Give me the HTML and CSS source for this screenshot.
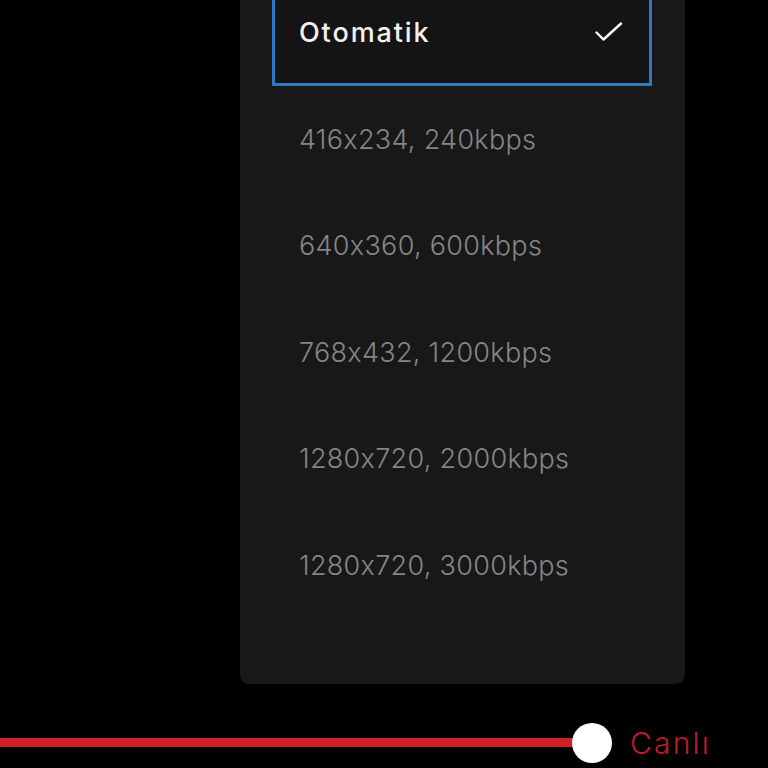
FILE: index.html
```html
<!DOCTYPE html>
<html lang="tr">
<head>
<meta charset="utf-8">
<link rel="stylesheet" href="styles.css">
</head>
<body>
<div class="player">
  <div class="menu">
    <div class="item selected">
      <span class="label">Otomatik</span>
      <svg class="check" width="28" height="20" viewBox="0 0 28 20"><path d="M1.5 10.5 L8.5 17.5 L26 1.5" fill="none" stroke="#fff" stroke-width="2.4" stroke-linecap="round" stroke-linejoin="round"/></svg>
    </div>
    <div class="item"><span class="label">416x234, 240kbps</span></div>
    <div class="item"><span class="label">640x360, 600kbps</span></div>
    <div class="item"><span class="label">768x432, 1200kbps</span></div>
    <div class="item"><span class="label">1280x720, 2000kbps</span></div>
    <div class="item"><span class="label">1280x720, 3000kbps</span></div>
  </div>
  <div class="seek">
    <div class="bar"></div>
    <div class="knob"></div>
    <span class="live">Canlı</span>
  </div>
</div>
</body>
</html>
```
FILE: styles.css
```css
html {
  overflow: hidden;
  background: #000;
}
body {
  margin: 0;
  padding: 0;
  background: #000;
}
.player {
  width: 768px;
  height: 768px;
  display: flex;
  flex-direction: column;
  font-family: Inter, "Noto Sans", sans-serif;
}
.menu {
  margin: -22px 0 0 240px;
  width: 445px;
  box-sizing: border-box;
  padding: 0 33px 65px 32px;
  background: #181818;
  border-radius: 0 0 9px 9px;
  display: flex;
  flex-direction: column;
}
.item {
  height: 106.5px;
  flex: none;
  box-sizing: border-box;
  border: 3px solid transparent;
  padding: 0 26px 0 24px;
  display: flex;
  align-items: center;
  justify-content: space-between;
}
.item.selected {
  height: 108px;
  border-color: #2e78c2;
  background: #141414;
}
.label {
  font-size: 27px;
  font-weight: 300;
  color: #858585;
  letter-spacing: 0.3px;
  white-space: nowrap;
}
.selected .label {
  color: #f2f2f2;
  font-weight: 500;
  letter-spacing: 1.9px;
}
.check {
  display: block;
}
.seek {
  margin-top: 39px;
  height: 40px;
  flex: none;
  display: flex;
  align-items: center;
}
.bar {
  width: 578px;
  height: 9px;
  background: #cf1f27;
  margin-right: -6px;
}
.knob {
  width: 40px;
  height: 40px;
  border-radius: 50%;
  background: #fff;
}
.live {
  margin-left: 18px;
  font-size: 30px;
  font-weight: 300;
  color: #bd1d26;
  letter-spacing: 2.2px;
}
```
